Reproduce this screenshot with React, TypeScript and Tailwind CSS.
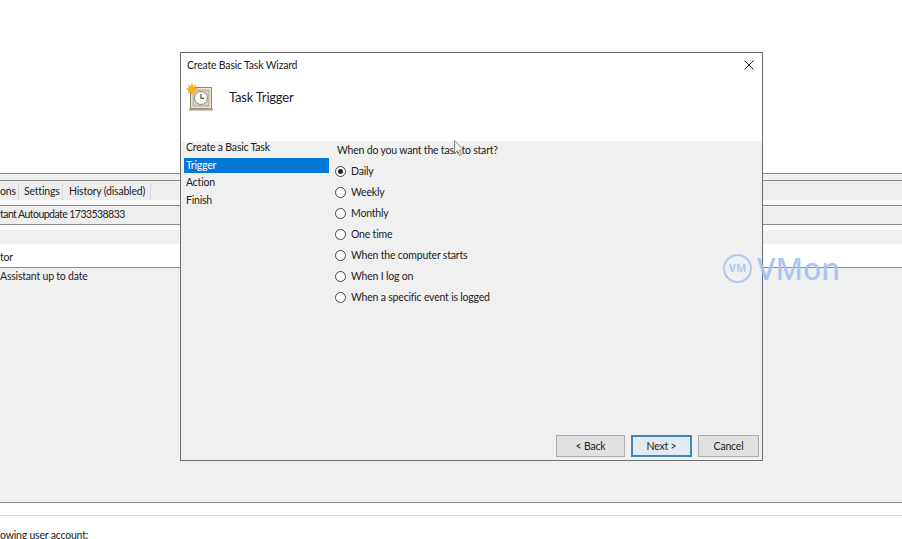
import React from 'react';

const triggers = ['Daily', 'Weekly', 'Monthly', 'One time', 'When the computer starts', 'When I log on', 'When a specific event is logged'];

function TaskIcon() {
    return (
        <svg width="28" height="28" viewBox="0 0 28 28" className="shrink-0">
            <rect x="4.5" y="4.5" width="21" height="21" fill="#efe6d6" stroke="#8d8471" />
            <rect x="7" y="7" width="16" height="16" fill="#d8cfbf" stroke="#b2a892" />
            <path d="M3 25.5h24v2H3z" fill="#a89f8c" />
            <circle cx="15" cy="15" r="6.5" fill="#f6f6f2" stroke="#8f8f8a" />
            <path d="M15 11v4.3h3" fill="none" stroke="#555" strokeWidth="1.2" />
            <path d="M6 0l1.3 3 3-1.2-1 3 3 1.3-3 1.3 1 3-3-1.2L6 13l-1.3-3.8-3 1.2 1-3L0 6.1l2.7-1.3-1-3 3 1.2z" fill="#f5b324" />
        </svg>
    );
}

function Radio({ checked }: { checked: boolean }) {
    return (
        <span className="flex h-[11px] w-[11px] shrink-0 items-center justify-center rounded-full border border-[#444] bg-white">
            {checked && <span className="h-[5px] w-[5px] rounded-full bg-[#222]" />}
        </span>
    );
}

function Button({ label, width, isDefault }: { label: string; width: string; isDefault?: boolean }) {
    return (
        <div className={`flex h-[22px] items-center justify-center pt-[1px] text-[#222] ${width} ${isDefault ? 'border-2 border-[#3f86bd] bg-[#e2ebf2]' : 'border border-[#adadad] bg-[#e1e1e1]'}`}>
            {label}
        </div>
    );
}

export default function App() {
    return (
        <div className="relative h-[539px] w-[902px] overflow-hidden bg-white font-['Lato',sans-serif] text-[10.5px] tracking-[-0.2px] text-[#222]">
            {/* Task properties window behind the wizard */}
            <div className="flex h-[539px] flex-col pt-[173px]">
                <div className="h-[8px] shrink-0 border-y border-y-[#8a8a8a] bg-[#f0f0f0]" />
                <div className="flex h-[19px] shrink-0 items-center whitespace-nowrap bg-[#eeeeee] pt-[3px]">
                    <div className="w-[19px] border-r border-[#d8d8d8]">ons</div>
                    <div className="w-[44px] border-r border-[#d8d8d8] pl-[5px]">Settings</div>
                    <div className="w-[88px] border-r border-[#d8d8d8] pl-[6px]">History (disabled)</div>
                </div>
                <div className="h-[5px] shrink-0 bg-[#fafafa]" />
                <div className="flex h-[20px] shrink-0 items-center whitespace-nowrap border-y border-y-[#8a8a8a] bg-[#eeeeee]">
                    <span className="tracking-[-0.55px]">tant Autoupdate 1733538833</span>
                </div>
                <div className="h-[5px] shrink-0 bg-white" />
                <div className="h-[14px] shrink-0 bg-[#f0f0f0]" />
                <div className="flex h-[24px] shrink-0 items-center border-b border-[#8a8a8a] bg-white pt-[4px]">
                    <span>tor</span>
                </div>
                <div className="h-[235px] shrink-0 border-b border-[#8a8a8a] bg-[#f0f0f0]">
                    <span className="block leading-[16px]">Assistant up to date</span>
                </div>
                <div className="h-[13px] shrink-0 border-b border-[#dcdcdc] bg-white" />
                <div className="mt-[12px] whitespace-nowrap leading-[14px]">owing user account:</div>
            </div>

            {/* Wizard dialog */}
            <div className="absolute left-[180px] top-[52px] flex h-[409px] w-[583px] flex-col border border-[#6e6e6e] bg-white">
                <div className="h-[88px] shrink-0 px-[6px] pt-[6px]">
                    <div className="flex items-center justify-between leading-[12px]">
                        <span>Create Basic Task Wizard</span>
                        <svg width="10" height="10" viewBox="0 0 10 10" className="mr-[2px]">
                            <path d="M.5.5l9 9M9.5.5l-9 9" stroke="#222" strokeWidth="1" fill="none" />
                        </svg>
                    </div>
                    <div className="mt-[12px] flex items-center gap-[16px]">
                        <div className="-ml-[1px] flex h-[28px] w-[27px] items-center">
                            <TaskIcon />
                        </div>
                        <span className="pt-[2px] text-[13px]">Task Trigger</span>
                    </div>
                </div>
                <div className="flex min-h-0 flex-1 flex-col bg-[#f0f0f0]">
                    <div className="flex flex-1">
                        <div className="w-[148px] shrink-0 pl-[3px]">
                            <div className="h-[17px] pl-[2px] leading-[12px]">Create a Basic Task</div>
                            <div className="h-[15px] bg-[#0078d7] pl-[2px] leading-[15px] text-white">Trigger</div>
                            <div className="mt-[2px] h-[18px] pl-[2px] leading-[14px]">Action</div>
                            <div className="h-[18px] pl-[2px] leading-[14px]">Finish</div>
                        </div>
                        <div className="flex-1 pt-[2px]">
                            <div className="pl-[8px] leading-[14px]">When do you want the task to start?</div>
                            <div className="mt-[7px] flex flex-col gap-[7px]">
                                {triggers.map((label, i) => (
                                    <div key={label} className="flex h-[14px] items-center gap-[5px] pl-[6px]">
                                        <Radio checked={i === 0} />
                                        <span className="pt-[2px]">{label}</span>
                                    </div>
                                ))}
                            </div>
                        </div>
                    </div>
                    <div className="flex justify-end gap-[6px] pb-[3px] pr-[3px]">
                        <Button label="< Back" width="w-[69px]" />
                        <Button label="Next >" width="w-[61px]" isDefault />
                        <Button label="Cancel" width="w-[61px]" />
                    </div>
                </div>
            </div>

            {/* Mouse pointer */}
            <svg width="10" height="17" viewBox="0 0 10 17" className="absolute left-[454px] top-[140px]">
                <path d="M.5.5v13l3-3 2 5 2-1-2-4.500h4z" fill="#f4f4f4" stroke="#777" strokeWidth=".8" />
            </svg>

            {/* Watermark */}
            <div className="absolute left-[723px] top-[254px] flex items-center gap-[5px] font-['Noto_Sans',sans-serif] tracking-normal opacity-90">
                <div className="flex h-[29px] w-[29px] items-center justify-center rounded-full border-2 border-[#a9c6f2] text-[11px] font-bold text-[#a9c6f2]">VM</div>
                <span className="text-[30px] font-medium leading-[29px] text-[#a3c2f0]">VMon</span>
            </div>
        </div>
    );
}
